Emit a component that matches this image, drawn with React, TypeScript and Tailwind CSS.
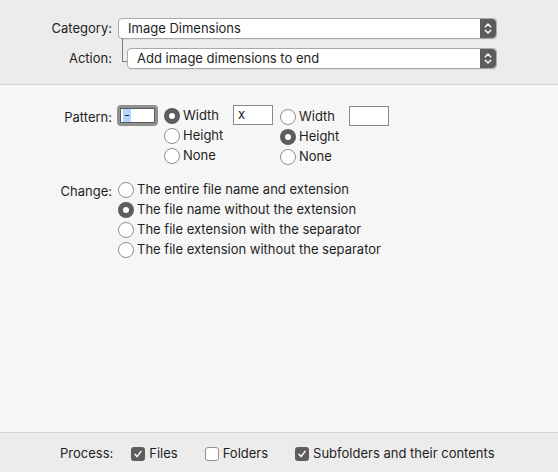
import React from 'react';

const font = { fontFamily: 'Inter, "Liberation Sans", sans-serif' };

function Stepper() {
    return (
        <div className="flex h-full w-[16px] items-center justify-center rounded-r-[4px] bg-[#5c5c5c]">
            <svg width="8" height="13" viewBox="0 0 8 13" fill="none" stroke="white" strokeWidth="1.4" strokeLinecap="round" strokeLinejoin="round">
                <path d="M1.3 4.8 L4 2.1 L6.7 4.8" />
                <path d="M1.3 8.2 L4 10.9 L6.7 8.2" />
            </svg>
        </div>
    );
}

function Select({ value }: { value: string }) {
    return (
        <div className="flex h-[21px] flex-1 items-center rounded-[4px] border border-[#a9a9a9] bg-white shadow-[0_1px_0_rgba(0,0,0,0.05)]">
            <span className="flex-1 pl-[9px] text-[13px] text-[#1e1e1e]">{value}</span>
            <Stepper />
        </div>
    );
}

function Radio({ checked, label }: { checked?: boolean; label: string }) {
    return (
        <div className="flex h-[20px] items-center gap-[3px]">
            {checked ? (
                <span className="flex h-[16px] w-[16px] shrink-0 items-center justify-center rounded-full bg-[#5d5d5d]">
                    <span className="h-[6px] w-[6px] rounded-full bg-white" />
                </span>
            ) : (
                <span className="h-[16px] w-[16px] shrink-0 rounded-full border border-[#8f8f8f] bg-white" />
            )}
            <span className="whitespace-nowrap text-[13px] text-[#1e1e1e]">{label}</span>
        </div>
    );
}

function Check({ checked, label }: { checked?: boolean; label: string }) {
    return (
        <div className="flex items-center gap-[4px]">
            {checked ? (
                <span className="flex h-[14px] w-[14px] items-center justify-center rounded-[3px] bg-[#5d5d5d]">
                    <svg width="10" height="10" viewBox="0 0 10 10" fill="none" stroke="white" strokeWidth="1.5" strokeLinecap="round" strokeLinejoin="round">
                        <path d="M2 5.3 L4.1 7.6 L8 2.4" />
                    </svg>
                </span>
            ) : (
                <span className="h-[14px] w-[14px] rounded-[3px] border border-[#8f8f8f] bg-white" />
            )}
            <span className="text-[13px] text-[#1e1e1e]">{label}</span>
        </div>
    );
}

export default function App() {
    return (
        <div className="flex h-[472px] w-[558px] flex-col bg-[#f6f6f6]" style={font}>
            {/* Header: category / action */}
            <div className="h-[85px] border-b border-[#d5d5d5] bg-[#ececec] pt-[18px] pr-[61px]">
                <div className="flex items-center">
                    <span className="w-[112px] text-right text-[13px] text-[#1e1e1e]">Category:</span>
                    <div className="ml-[6px] flex flex-1">
                        <Select value="Image Dimensions" />
                    </div>
                </div>
                <div className="mt-[9px] flex items-center">
                    <span className="w-[112px] text-right text-[13px] text-[#1e1e1e]">Action:</span>
                    <div className="relative ml-[15px] flex flex-1">
                        <span className="absolute left-[-5px] top-[-10px] h-[24px] w-[5px] border-b border-l border-[#7a7a7a]" />
                        <Select value="Add image dimensions to end" />
                    </div>
                </div>
            </div>

            {/* Options */}
            <div className="flex-1 pt-[20px]">
                <div className="flex items-start">
                    <span className="mt-[3px] w-[112px] text-right text-[13px] text-[#1e1e1e]">Pattern:</span>
                    <div className="ml-[5px] h-[21px] w-[41px] rounded-[4px] border-[3px] border-[#909090] bg-white">
                        <div className="flex h-full w-full items-center border border-[#5a5a5a] pl-[2px]">
                            <span className="bg-[#b3d7ff] px-[1px] text-[13px] leading-[13px] text-[#1e1e1e]">-</span>
                        </div>
                    </div>
                    <div className="ml-[6px] mt-[1px] flex w-[69px] flex-col">
                        <Radio checked label="Width" />
                        <Radio label="Height" />
                        <Radio label="None" />
                    </div>
                    <div className="flex h-[20px] w-[40px] items-center border border-[#8a8a8a] bg-white pl-[4px] text-[13px] text-[#1e1e1e]">
                        x
                    </div>
                    <div className="ml-[7px] mt-[2px] flex w-[69px] flex-col">
                        <Radio label="Width" />
                        <Radio checked label="Height" />
                        <Radio label="None" />
                    </div>
                    <div className="mt-[1px] h-[20px] w-[40px] border border-[#8a8a8a] bg-white" />
                </div>

                <div className="mt-[13px] flex items-start">
                    <span className="mt-[2px] w-[112px] text-right text-[13px] text-[#1e1e1e]">Change:</span>
                    <div className="ml-[6px] flex flex-col">
                        <Radio label="The entire file name and extension" />
                        <Radio checked label="The file name without the extension" />
                        <Radio label="The file extension with the separator" />
                        <Radio label="The file extension without the separator" />
                    </div>
                </div>
            </div>

            {/* Process */}
            <div className="flex h-[40px] items-center border-t border-[#d5d5d5] bg-[#ececec] pt-[2px]">
                <span className="ml-[60px] text-[13px] text-[#1e1e1e]">Process:</span>
                <div className="ml-[18px]">
                    <Check checked label="Files" />
                </div>
                <div className="ml-[27px]">
                    <Check label="Folders" />
                </div>
                <div className="ml-[27px]">
                    <Check checked label="Subfolders and their contents" />
                </div>
            </div>
        </div>
    );
}
